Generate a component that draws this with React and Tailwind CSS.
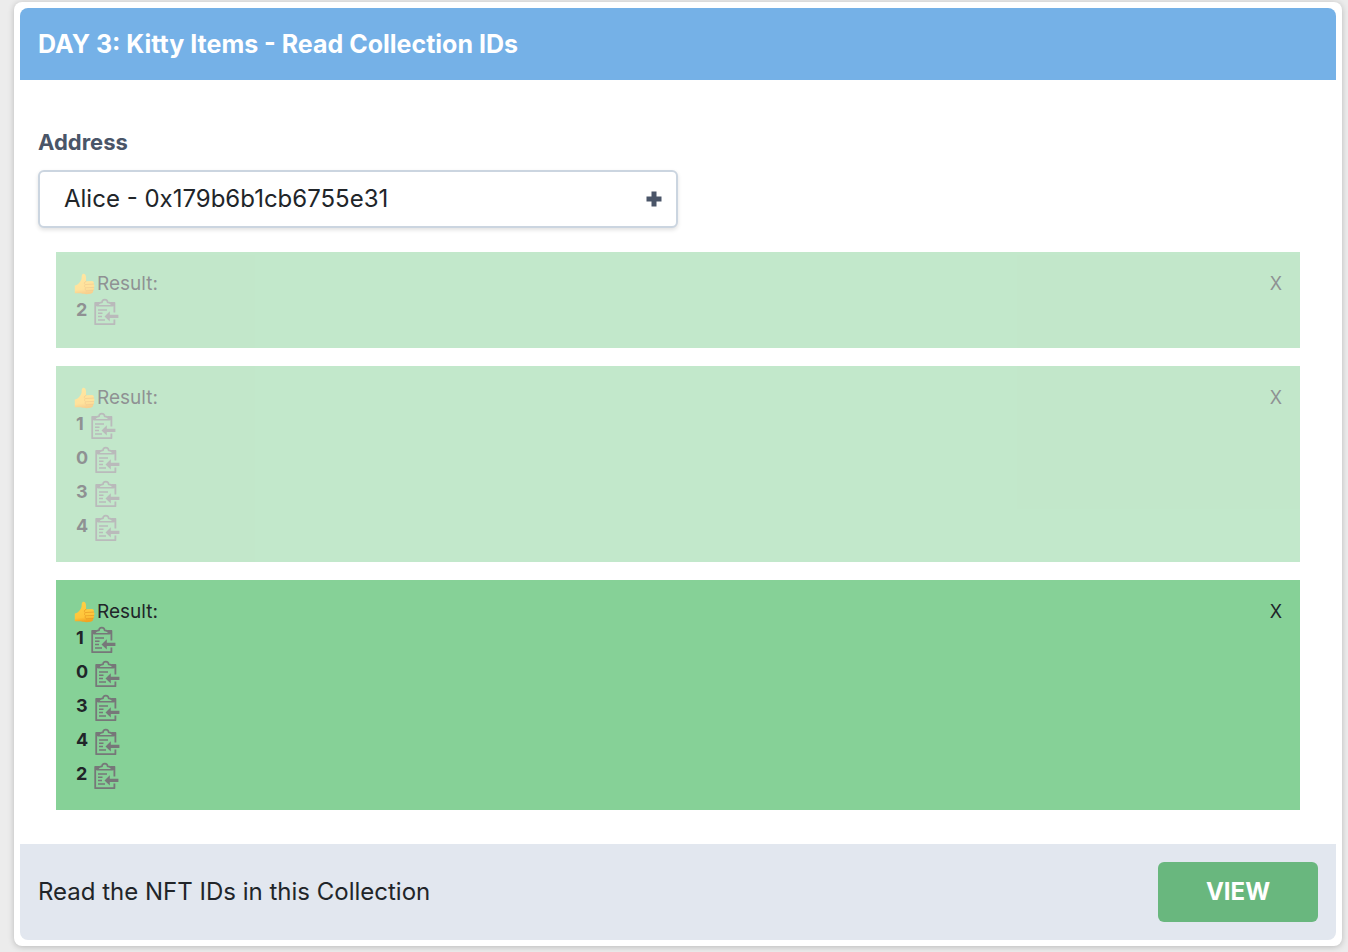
import { useState } from "react";

const ADDRESSES = ["Alice - 0x179b6b1cb6755e31"];

const INITIAL_RESULTS = [
  { key: "a", ids: [2], stale: true },
  { key: "b", ids: [1, 0, 3, 4], stale: true },
  { key: "c", ids: [1, 0, 3, 4, 2], stale: false },
];

function ClipboardIcon() {
  return (
    <svg viewBox="0 0 27 28" className="h-7 w-[27px]" fill="none" aria-hidden="true">
      <path
        d="M5 4.8H2.2V26.2H21.4V21.4M19 4.8H21.4V14.4"
        stroke="#777779"
        strokeWidth="1.8"
        strokeLinejoin="round"
      />
      <path d="M2 3.9H6.6L4.4 8.2H2zM21.6 3.9H17L19.2 8.2H21.6z" fill="#777779" />
      <path
        d="M4.6 7.8C5.2 5.4 6.6 4.4 9 4.4C9 2.4 10.3 1.6 11.8 1.6S14.6 2.4 14.6 4.4C17 4.4 18.4 5.4 19 7.8Z"
        stroke="#777779"
        strokeWidth="1.6"
        strokeLinejoin="round"
      />
      <path d="M5 12H14M5 15.2H9.5M5 18.6H9M5 22H12" stroke="#777779" strokeWidth="1.5" />
      <path d="M11.5 18.4L16.8 13.2V16.8H25.4V20H16.8V23.6Z" fill="#777779" />
    </svg>
  );
}

function ThumbIcon() {
  return (
    <svg viewBox="0 0 22 22" className="h-[22px] w-[22px]" aria-hidden="true">
      <defs>
        <linearGradient id="thumb-fill" x1="0" y1="0" x2="0.15" y2="1">
          <stop offset="0" stopColor="#ffd046" />
          <stop offset="0.8" stopColor="#ffc53a" />
          <stop offset="1" stopColor="#f3a322" />
        </linearGradient>
      </defs>
      <path
        d="M.8 12.6C4 12 6.8 9 7.6 5.6C7.7 3.2 7.7 .8 9.5 .8C12 .8 12.4 4.2 12 8.2L18.2 8C20 8.1 20.4 10.1 19.5 11C20.9 11.8 20.8 13.8 19.8 14.4C20.6 15.5 20.1 17.2 19.1 17.6C19.4 19.4 18.4 20.5 16.8 20.8C13.4 21.4 9.2 21.2 6.6 20.3C4.6 20 2.8 20.2.8 20.3Z"
        fill="url(#thumb-fill)"
      />
      <path
        d="M12 8.4C10 8.8 9.8 10.8 11.2 11.6C10.2 12.6 10.4 14.2 11.6 14.8C10.8 15.8 11.2 17.2 12.2 17.8M11.8 11.5L19.4 11.1M12 14.8L19.6 14.4M12.4 17.8L18.9 17.5"
        fill="none"
        stroke="#e79a24"
        strokeWidth="0.7"
        strokeLinecap="round"
      />
    </svg>
  );
}

function Result({ ids, stale, onClose }) {
  return (
    <section
      className={`min-h-24 bg-[#86d197] px-[18px] pt-[18px] pb-[14px] text-lg text-[#212529] ${stale ? "opacity-50" : ""}`}
    >
      <div className="flex h-7 items-center justify-between leading-7">
        <span className="flex items-center gap-px">
          <ThumbIcon />
          <span className="text-[19px]">Result:</span>
        </span>
        <button type="button" onClick={onClose} className="cursor-pointer">
          X
        </button>
      </div>
      <ul>
        {ids.map((id) => (
          <li key={id} className="flex h-[34px] items-start gap-1.5 pl-0.5">
            <span className="leading-6 font-bold">{id}</span>
            <button type="button" aria-label={`Copy ${id}`} className="cursor-pointer">
              <ClipboardIcon />
            </button>
          </li>
        ))}
      </ul>
    </section>
  );
}

export default function App() {
  const [results, setResults] = useState(INITIAL_RESULTS);
  const close = (key) => setResults(results.filter((r) => r.key !== key));

  return (
    <div className="min-h-screen bg-[#ececec] pt-0.5 pr-1.5 pb-1.5 pl-3.5 font-[Inter,sans-serif] text-[#212529]">
      <main className="rounded-lg bg-white p-1.5 shadow-[0_1px_6px_rgba(0,0,0,0.22)]">
        <header className="flex h-[72px] items-center rounded-t-lg bg-[#75b1e7] px-[18px]">
          <h1 className="text-[25px] leading-8 font-bold text-white">
            DAY 3: Kitty Items - Read Collection IDs
          </h1>
        </header>

        <div className="px-[18px] pt-12 pb-[34px]">
          <label
            htmlFor="address"
            className="block text-[22px] leading-7 font-bold text-[#4a5568]"
          >
            Address
          </label>
          <div className="relative mt-3.5 max-w-[640px]">
            <select
              id="address"
              className="h-[58px] w-full appearance-none rounded-md border-2 border-[#cbd5e0] bg-white px-6 text-2xl shadow-[0_2px_4px_rgba(0,0,0,0.12)]"
            >
              {ADDRESSES.map((a) => (
                <option key={a}>{a}</option>
              ))}
            </select>
            <span className="pointer-events-none absolute inset-y-0 right-4 flex items-center text-[#4a5568]">
              <svg viewBox="0 0 16 16" className="h-4 w-4" aria-hidden="true">
                <path d="M5.5 0.5H10.5V5.5H15.5V10.5H10.5V15.5H5.5V10.5H0.5V5.5H5.5Z" fill="currentColor" />
              </svg>
            </span>
          </div>

          <div className="mt-6 flex flex-col gap-[18px] px-[18px]">
            {results.map((r) => (
              <Result key={r.key} ids={r.ids} stale={r.stale} onClose={() => close(r.key)} />
            ))}
          </div>
        </div>

        <footer className="flex items-center justify-between rounded-b-lg bg-[#e2e7ef] p-[18px]">
          <p className="text-2xl">Read the NFT IDs in this Collection</p>
          <button
            type="button"
            className="h-[60px] w-40 cursor-pointer rounded-md bg-[#69b77e] text-2xl font-bold text-white"
          >
            VIEW
          </button>
        </footer>
      </main>
    </div>
  );
}
